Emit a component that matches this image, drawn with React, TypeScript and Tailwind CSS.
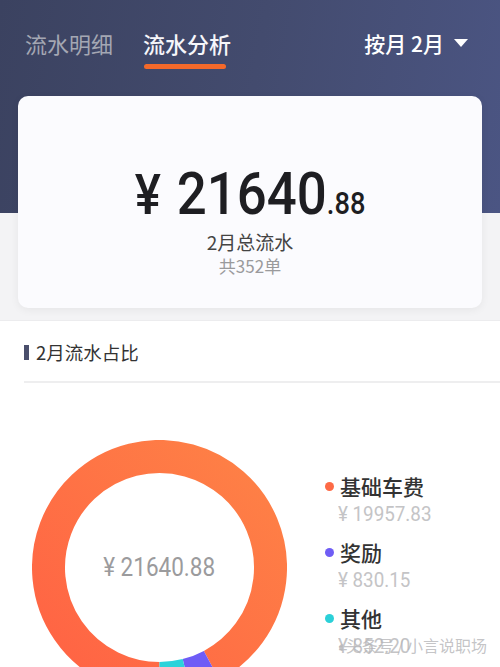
import React from "react";

const cjk = "font-['Noto_Sans_CJK_SC','Noto_Sans',sans-serif]";
const num = "font-['Roboto','Noto_Sans_CJK_SC',sans-serif]";

function Donut() {
  const cx = 127.5;
  const cy = 127.5;
  const r = 111;
  const data = [
    { v: 19957.83, c: "url(#og)" },
    { v: 830.15, c: "#6e5cf6" },
    { v: 852.9, c: "#2bd3da" },
  ];
  const total = data.reduce((s, d) => s + d.v, 0);
  let a = 180;
  const arcs = data.map((d, i) => {
    const sweep = (d.v / total) * 360;
    const a0 = a;
    const a1 = a + sweep;
    a = a1;
    const p = (deg: number) => {
      const rad = ((deg - 90) * Math.PI) / 180;
      return [cx + r * Math.cos(rad), cy + r * Math.sin(rad)];
    };
    const [x0, y0] = p(a0);
    const [x1, y1] = p(a1);
    const large = sweep > 180 ? 1 : 0;
    return (
      <path
        key={i}
        d={`M ${x0} ${y0} A ${r} ${r} 0 ${large} 1 ${x1} ${y1}`}
        fill="none"
        stroke={d.c}
        strokeWidth={33}
      />
    );
  });
  return (
    <svg width="255" height="255" viewBox="0 0 255 255" className="shrink-0">
      <defs>
        <linearGradient id="og" x1="0" y1="1" x2="1" y2="0">
          <stop offset="0" stopColor="#ff6244" />
          <stop offset="1" stopColor="#fe8246" />
        </linearGradient>
      </defs>
      {arcs}
    </svg>
  );
}

function LegendItem({ color, label, amount }: { color: string; label: string; amount: string }) {
  return (
    <div className="flex flex-col">
      <div className="flex items-center h-[28px]">
        <span className={`w-[9px] h-[9px] rounded-full ${color}`} />
        <span className={`${cjk} ml-[6px] text-[21px] leading-[28px] font-medium text-[#333333]`}>{label}</span>
      </div>
      <div className={`${num} h-[28px] ml-[13px] text-[20px] leading-[28px] text-[#c4c4c6] origin-left scale-x-[0.94] whitespace-nowrap`}>
        {amount}
      </div>
    </div>
  );
}

export default function App() {
  return (
    <div className="relative w-[500px] h-[667px] overflow-hidden bg-white">
      {/* header */}
      <div className="h-[213px] bg-[linear-gradient(100deg,#3b4260_0%,#434b6e_50%,#4b5583_100%)]">
        <div className="flex items-start pt-[30px] pl-[25px] pr-[32px]">
          <div className={`${cjk} text-[22px] leading-[26px] text-[#a4a7b3]`}>流水明细</div>
          <div className="ml-[30px] flex flex-col">
            <div className={`${cjk} text-[22px] leading-[26px] font-medium text-[#f6f6fa]`}>流水分析</div>
            <div className="mt-[8px] ml-[1px] w-[82px] h-[5px] rounded-full bg-[#f4692a]" />
          </div>
          <div className="ml-auto flex items-center">
            <span className={`${cjk} text-[21px] leading-[26px] font-medium text-white`}>按月 2月</span>
            <svg width="14" height="9" viewBox="0 0 14 9" className="ml-[10px]">
              <path d="M0 0 H14 L7 8 Z" fill="#ffffff" />
            </svg>
          </div>
        </div>
      </div>

      {/* grey band with card */}
      <div className="bg-[#f3f3f5] h-[107px] px-[18px] flex flex-col">
        <div className="-mt-[117px] h-[212px] shrink-0 rounded-[10px] bg-[#fbfbfe] shadow-[0_2px_8px_rgba(0,0,0,0.06)] flex flex-col items-center pt-[68px]">
          <div className={`${num} flex items-baseline text-[#1e1e22] scale-x-[0.88] whitespace-nowrap`}>
            <span className="text-[56px] leading-[60px] font-medium">¥</span>
            <span className="ml-[18px] text-[60px] leading-[60px] font-medium">21640</span>
            <span className="text-[31px] leading-[60px] font-medium">.88</span>
          </div>
          <div className={`${cjk} -mt-[4px] text-[19px] leading-[24px] text-[#444]`}>2月总流水</div>
          <div className={`${cjk} mt-[1px] text-[17px] leading-[22px] text-[#9a9a9c]`}>共352单</div>
        </div>
      </div>

      {/* white section */}
      <div className="border-t border-[#ececee]">
        <div className="flex items-center pl-[24px] pt-[2px] h-[60px]">
          <span className="w-[5px] h-[15px] bg-[#4a4f6c]" />
          <span className={`${cjk} ml-[7px] text-[18.5px] leading-[24px] text-[#333]`}>2月流水占比</span>
        </div>
        <div className="ml-[24px] h-[2px] bg-[#eeeeef]" />

        <div className="flex items-start pl-[32px] mt-[57px]">
          <div className="relative">
            <Donut />
            <div className="absolute inset-0 flex items-center justify-center">
              <span className={`${num} text-[25px] text-[#9b9b9d] scale-x-[0.9] whitespace-nowrap`}>¥ 21640.88</span>
            </div>
          </div>
          <div className="ml-[38px] mt-[32px] flex flex-col gap-[10px]">
            <LegendItem color="bg-[#fd6a46]" label="基础车费" amount="¥ 19957.83" />
            <LegendItem color="bg-[#6f5df5]" label="奖励" amount="¥ 830.15" />
            <LegendItem color="bg-[#2bd0d8]" label="其他" amount="¥ 852.20" />
          </div>
        </div>
      </div>

      {/* watermark */}
      <div className={`${cjk} absolute left-[336px] top-[634px] text-[16px] leading-[22px] text-[#b5b5b8]/80 whitespace-nowrap`}>
        ◖头条号 / 小言说职场
      </div>
    </div>
  );
}
